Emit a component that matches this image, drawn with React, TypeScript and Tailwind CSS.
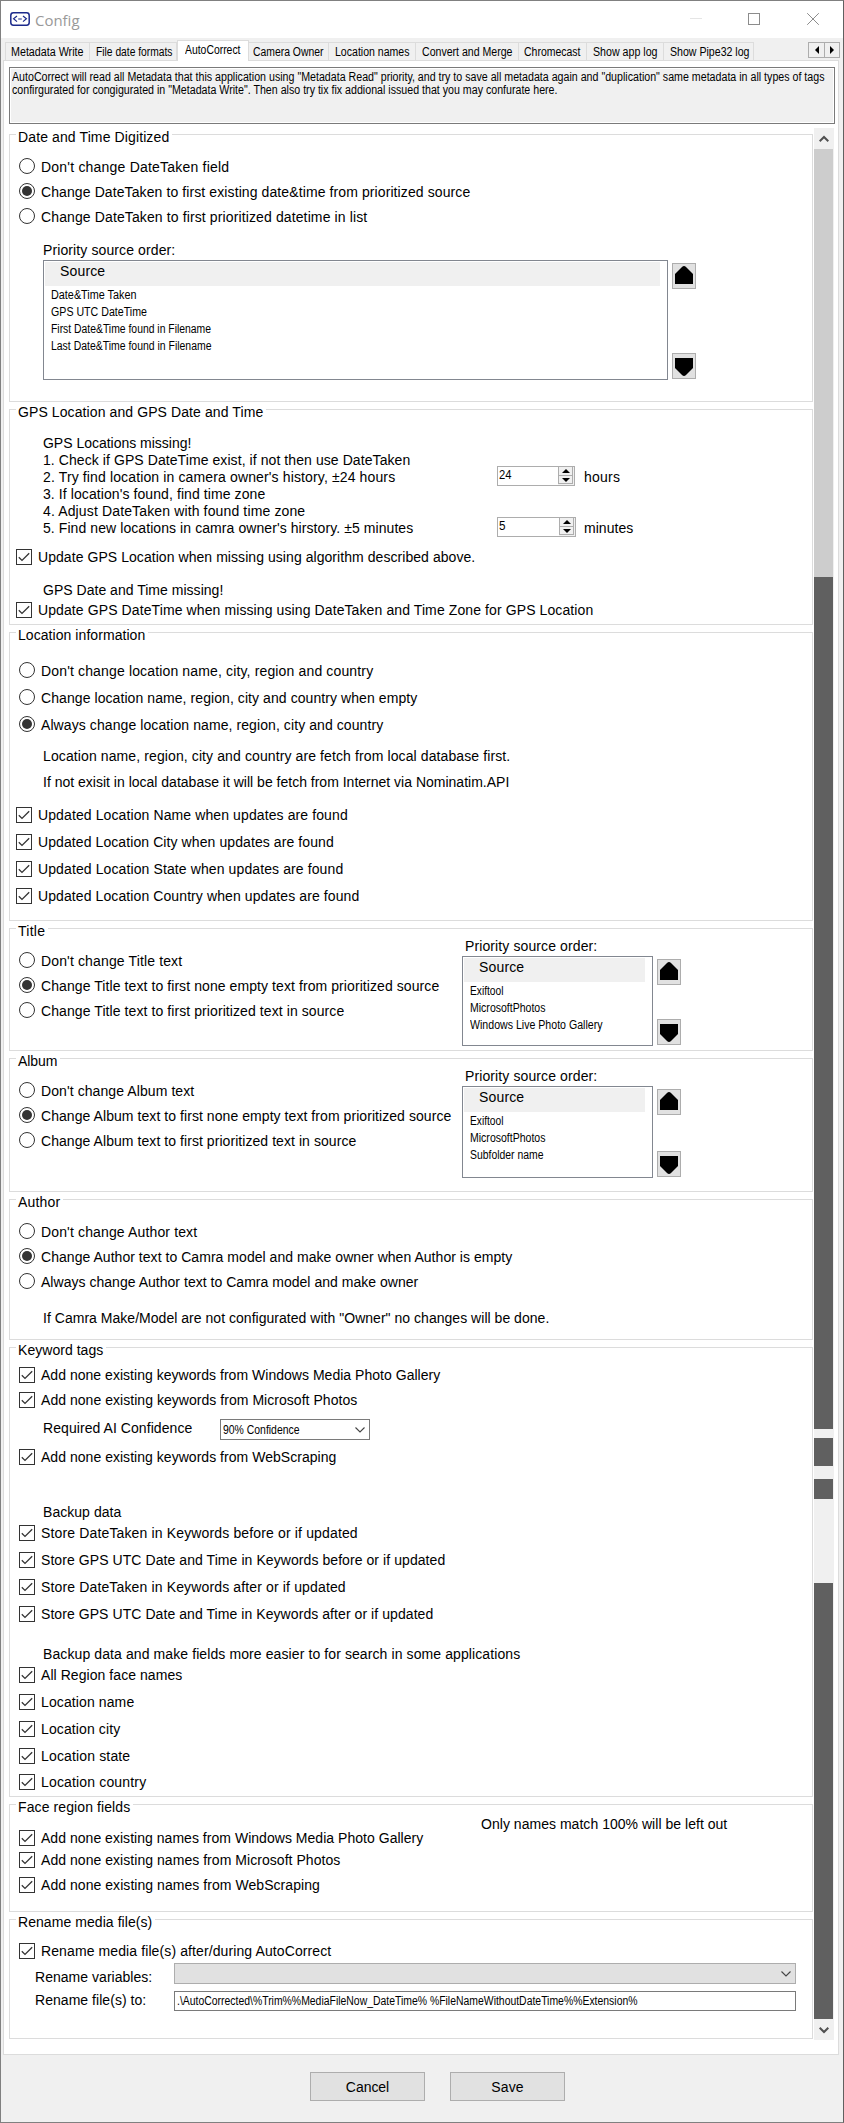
import { useLayoutEffect, useRef, useState } from "react";
import type { ReactNode } from "react";

/* A single line of text fitted to a known run width, by tracking or, when narrow, by condensing. */
function Txt({ w, narrow = false, className = "", children }: { w: number; narrow?: boolean; className?: string; children: string }) {
  const ref = useRef<HTMLSpanElement>(null);
  const [natural, setNatural] = useState(0);
  useLayoutEffect(() => {
    if (ref.current) setNatural(ref.current.getBoundingClientRect().width);
  }, [children]);
  const style = !natural
    ? {}
    : narrow
      ? { transform: "scaleX(" + (w + 0.5) / natural + ")" }
      : { letterSpacing: (w + 0.3 - natural) / children.length + "px" };
  return (
    <span ref={ref} className={"inline-block origin-left whitespace-pre " + className} style={style}>
      {children}
    </span>
  );
}

function Group({ title, w, className, children }: { title: string; w: number; className: string; children: ReactNode }) {
  return (
    <section className={"flex w-[804px] shrink-0 flex-col border border-[#dcdcdc] " + className}>
      <div className="-mt-[5px] ml-[6px] flex h-4 w-fit shrink-0 bg-white pl-[2px] pr-[3px] leading-[14px]">
        <Txt w={w}>{title}</Txt>
      </div>
      {children}
    </section>
  );
}

function Radio({ w, on = false, className = "", children }: { w: number; on?: boolean; className?: string; children: string }) {
  return (
    <label className={"ml-[9px] flex h-4 shrink-0 gap-[6px] leading-4 " + className}>
      <span className="flex size-4 shrink-0 items-center justify-center rounded-full border border-[#333]">
        {on && <span className="size-[10px] rounded-full bg-[#333]" />}
      </span>
      <Txt w={w} className="pt-px">{children}</Txt>
    </label>
  );
}

function Check({ w, className = "ml-[9px]", children }: { w: number; className?: string; children: string }) {
  return (
    <label className={"flex h-4 shrink-0 gap-[6px] leading-4 " + className}>
      <span className="flex size-4 shrink-0 items-center justify-center border border-[#333]">
        <svg width="14" height="14" viewBox="0 0 14 14" fill="none" stroke="#333" strokeWidth="1.3">
          <path d="M1.8 7.2 5 10.4 12.2 3.2" />
        </svg>
      </span>
      <Txt w={w}>{children}</Txt>
    </label>
  );
}

function Line({ w, className, children }: { w: number; className: string; children: string }) {
  return (
    <div className={"flex h-4 shrink-0 leading-[14px] " + className}>
      <Txt w={w}>{children}</Txt>
    </div>
  );
}

function ArrowButton({ down = false }: { down?: boolean }) {
  return (
    <button className={"flex h-[26px] w-6 justify-center border border-[#adadad] bg-[#e1e1e1] " + (down ? "items-end pb-[2px]" : "items-start pt-[2px]")}>
      <svg width="18" height="18" viewBox="0 0 18 18">
        <path d={down ? "M0 0H18V10L11 17Q9 19 7 17L0 10Z" : "M0 18V8L7 1Q9 -1 11 1L18 8V18Z"} fill="#000" />
      </svg>
    </button>
  );
}

type Item = { t: string; w: number };

function SourceList({ items, box, header, className }: { items: Item[]; box: string; header: string; className: string }) {
  return (
    <div className={"flex shrink-0 gap-1 " + className}>
      <div className={"flex flex-col border border-[#828790] bg-white p-px " + box}>
        <div className={"flex h-6 shrink-0 bg-[#f0f0f0] pl-[15px] pt-px leading-4 " + header}>
          <Txt w={45}>Source</Txt>
        </div>
        <div className="flex flex-col pl-[6px] pt-[3px]">
          {items.map((i) => (
            <div key={i.t} className="flex h-[17px] text-[12px] leading-[13px]">
              <Txt narrow w={i.w}>{i.t}</Txt>
            </div>
          ))}
        </div>
      </div>
      <div className="flex flex-col justify-between pb-px pt-[3px]">
        <ArrowButton />
        <ArrowButton down />
      </div>
    </div>
  );
}

function Spinner({ value, w, unit, uw, box, gap }: { value: string; w: number; unit: string; uw: number; box: string; gap: string }) {
  return (
    <div className={"flex h-5 items-start " + gap}>
      <div className={"flex h-5 justify-between border border-[#adadad] bg-white pl-[1px] " + box}>
        <div className="pt-[2px] text-[12px] leading-[13px]">
          <Txt narrow w={w}>{value}</Txt>
        </div>
        <div className="flex w-4 flex-col bg-[#f0f0f0] pr-px">
          <span className="flex h-[9px] items-center justify-center border border-t-0 border-[#adadad]">
            <svg width="8" height="4" viewBox="0 0 8 4"><path d="M0 4 4 0 8 4Z" /></svg>
          </span>
          <span className="flex h-[8px] items-center justify-center border border-t-0 border-[#adadad]">
            <svg width="8" height="4" viewBox="0 0 8 4"><path d="M0 0 4 4 8 0Z" /></svg>
          </span>
        </div>
      </div>
      <div className="flex pt-[3px] leading-4">
        <Txt w={uw}>{unit}</Txt>
      </div>
    </div>
  );
}

function Chevron() {
  return (
    <svg width="10" height="6" viewBox="0 0 10 6" fill="none" stroke="#444" strokeWidth="1.1">
      <path d="M.5 .5 5 5 9.5 .5" />
    </svg>
  );
}

const TABS: { t: string; w: number; c: string }[] = [
  { t: "Metadata Write", w: 72, c: "w-[85px] pl-[5px] border-l" },
  { t: "File date formats", w: 76, c: "w-[87px] pl-[6px]" },
  { t: "AutoCorrect", w: 55, c: "" },
  { t: "Camera Owner", w: 70, c: "w-[80px] pl-[4px]" },
  { t: "Location names", w: 74, c: "w-[87px] pl-[6px]" },
  { t: "Convert and Merge", w: 90, c: "w-[103px] pl-[6px]" },
  { t: "Chromecast", w: 56, c: "w-[68px] pl-[5px]" },
  { t: "Show app log", w: 64, c: "w-[77px] pl-[6px]" },
  { t: "Show Pipe32 log", w: 79, c: "w-[90px] pl-[6px]" },
];

function TabStrip() {
  return (
    <div className="flex h-[23px] shrink-0 items-start pl-1 pt-[2px]">
      {TABS.map((tab) =>
        tab.t === "AutoCorrect" ? (
          <div key={tab.t} className="z-10 flex h-[21px] w-[72px] shrink-0 border border-b-0 border-[#dcdcdc] bg-white pl-[7px] pt-[2px] text-[12px] leading-[14px]">
            <Txt narrow w={tab.w}>{tab.t}</Txt>
          </div>
        ) : (
          <div key={tab.t} className={"mt-[2px] flex h-[18px] shrink-0 border-r border-t border-[#dcdcdc] bg-[#f0f0f0] pt-[2px] text-[12px] leading-[14px] " + tab.c}>
            <Txt narrow w={tab.w}>{tab.t}</Txt>
          </div>
        )
      )}
      <div className="ml-[54px] mt-[2px] flex h-4 shrink-0">
        <span className="flex w-[17px] items-center justify-center border border-[#adadad]">
          <svg width="4" height="8" viewBox="0 0 4 8"><path d="M4 0V8L0 4Z" /></svg>
        </span>
        <span className="-ml-px flex w-[16px] items-center justify-center border border-[#adadad]">
          <svg width="4" height="8" viewBox="0 0 4 8"><path d="M0 0V8L4 4Z" /></svg>
        </span>
      </div>
    </div>
  );
}

function Scrollbar() {
  return (
    <div className="flex w-5 shrink-0 flex-col bg-[#f0f0f0]">
      <div className="flex h-[21px] items-center justify-center">
        <svg width="10" height="8" viewBox="0 0 10 8" fill="none" stroke="#505050" strokeWidth="2"><path d="M.7 6.3 5 2 9.3 6.3" /></svg>
      </div>
      <div className="h-[428px] w-[19px] bg-[#cdcdcd]" />
      <div className="h-[852px] w-[19px] bg-[#606060]" />
      <div className="mt-[9px] h-[28px] w-[19px] bg-[#606060]" />
      <div className="mt-[13px] h-[20px] w-[19px] bg-[#606060]" />
      <div className="mt-[84px] h-[436px] w-[19px] bg-[#606060]" />
      <div className="flex h-[21px] items-center justify-center">
        <svg width="10" height="8" viewBox="0 0 10 8" fill="none" stroke="#505050" strokeWidth="2"><path d="M.7 1.7 5 6 9.3 1.7" /></svg>
      </div>
    </div>
  );
}

export default function App() {
  return (
    <div className="flex h-[2123px] w-[844px] flex-col overflow-hidden border border-[#808080] border-r-[#606060] bg-[#f0f0f0] font-['Liberation_Sans',Arial,sans-serif] text-[14px] text-black">
      <header className="flex h-[37px] shrink-0 items-start bg-white pl-[9px]">
        <svg className="mt-[11px]" width="20" height="14" viewBox="0 0 20 14" fill="none" stroke="#1c2a8c">
          <rect x=".8" y=".8" width="18.4" height="12.4" rx="2.6" strokeWidth="1.5" />
          <path d="M7 4 3.6 6.8 7 9.6M13 4l3.4 2.8L13 9.6M8.2 7h3.6" strokeWidth="1.2" />
        </svg>
        <div className="ml-[5px] mt-[8px] flex w-[655px] font-['Open_Sans','Noto_Sans',sans-serif] text-[15px] leading-[22px] text-[#999]">
          <Txt narrow w={44}>Config</Txt>
        </div>
        <span className="mt-[17px] h-px w-3 bg-[#e5e5e5]" />
        <span className="ml-[46px] mt-[12px] size-3 border border-[#8c8c8c]" />
        <svg className="ml-[47px] mt-[12px]" width="12" height="12" viewBox="0 0 12 12" stroke="#8c8c8c"><path d="M.2 .2 11.8 11.8M11.8 .2 .2 11.8" /></svg>
      </header>

      <div className="flex h-[23px] shrink-0 flex-col">
        <TabStrip />
      </div>

      <main className="-mt-px ml-[2px] flex h-[1995px] w-[836px] shrink-0 flex-col border border-[#dcdcdc] bg-white">
        <div className="ml-[5px] mt-[6px] flex h-[57px] w-[826px] shrink-0 flex-col border border-[#7a7a7a] bg-[#f0f0f0] pl-[2px] pt-[3px] text-[12px] leading-[13px] shadow-[inset_0_0_0_1px_#fff]">
          <Txt narrow w={812} className="w-fit">{'AutoCorrect will read all Metadata that this application using "Metadata Read" priority, and try to save all metadata again and "duplication" same metadata in all types of tags'}</Txt>
          <Txt narrow w={545} className="w-fit">{'confirgurated for congigurated in "Metadata Write". Then also try tix fix addional issued that you may confurate here.'}</Txt>
        </div>

        <div className="ml-[5px] mt-[4px] flex h-[1912px] gap-px">
          <div className="flex w-[804px] flex-col gap-[7px] pt-[6px]">
            <Group title="Date and Time Digitized" w={151} className="h-[268px]">
              <Radio w={188} className="mt-[12px]">Don't change DateTaken field</Radio>
              <Radio w={429} on className="mt-[9px]">{"Change DateTaken to first existing date&time from prioritized source"}</Radio>
              <Radio w={326} className="mt-[9px]">Change DateTaken to first prioritized datetime in list</Radio>
              <Line w={132} className="ml-[33px] mt-[18px] pt-px">Priority source order:</Line>
              <SourceList
                className="ml-[33px] mt-[2px] h-[120px]"
                box="w-[625px]"
                header="w-[615px]"
                items={[
                  { t: "Date&Time Taken", w: 85 },
                  { t: "GPS UTC DateTime", w: 95.5 },
                  { t: "First Date&Time found in Filename", w: 159.5 },
                  { t: "Last Date&Time found in Filename", w: 160 },
                ]}
              />
            </Group>

            <Group title="GPS Location and GPS Date and Time" w={245} className="h-[216px]">
              <div className="ml-[33px] mt-[14px] flex h-[102px] shrink-0">
                <div className="flex w-[454px] flex-col items-start leading-[17px]">
                  <Txt w={148}>GPS Locations missing!</Txt>
                  <Txt w={367}>1. Check if GPS DateTime exist, if not then use DateTaken</Txt>
                  <Txt w={352}>2. Try find location in camera owner's history, ±24 hours</Txt>
                  <Txt w={222}>3. If location's found, find time zone</Txt>
                  <Txt w={262}>4. Adjust DateTaken with found time zone</Txt>
                  <Txt w={370}>5. Find new locations in camra owner's hirstory. ±5 minutes</Txt>
                </div>
                <div className="flex flex-col justify-between pt-[31px]">
                  <Spinner value="24" w={12} unit="hours" uw={36} box="w-[78px]" gap="gap-[9px]" />
                  <Spinner value="5" w={6} unit="minutes" uw={49} box="w-[79px]" gap="gap-[8px]" />
                </div>
              </div>
              <Check w={437} className="ml-[6px] mt-[12px]">Update GPS Location when missing using algorithm described above.</Check>
              <Line w={180} className="ml-[33px] mt-[18px]">GPS Date and Time missing!</Line>
              <Check w={555} className="ml-[6px] mt-[3px]">Update GPS DateTime when missing using DateTaken and Time Zone for GPS Location</Check>
            </Group>

            <Group title="Location information" w={127} className="h-[289px]">
              <Radio w={332} className="mt-[18px]">Don't change location name, city, region and country</Radio>
              <Radio w={376} className="mt-[11px]">Change location name, region, city and country when empty</Radio>
              <Radio w={342} on className="mt-[11px]">Always change location name, region, city and country</Radio>
              <Line w={467} className="ml-[33px] mt-[16px] pt-px">Location name, region, city and country are fetch from local database first.</Line>
              <Line w={466} className="ml-[33px] mt-[11px]">If not exisit in local database it will be fetch from Internet via Nominatim.API</Line>
              <Check w={309.5} className="ml-[6px] mt-[16px]">Updated Location Name when updates are found</Check>
              <Check w={295.5} className="ml-[6px] mt-[11px]">Updated Location City when updates are found</Check>
              <Check w={305} className="ml-[6px] mt-[11px]">Updated Location State when updates are found</Check>
              <Check w={321} className="ml-[6px] mt-[11px]">Updated Location Country when updates are found</Check>
            </Group>

            <Group title="Title" w={27} className="h-[123px]">
              <div className="flex">
                <div className="flex w-[452px] flex-col gap-[9px] pt-[12px]">
                  <Radio w={141}>Don't change Title text</Radio>
                  <Radio w={398} on>Change Title text to first none empty text from prioritized source</Radio>
                  <Radio w={303}>Change Title text to first prioritized text in source</Radio>
                </div>
                <div className="-mt-px flex flex-col">
                  <Line w={132} className="ml-[3px]">Priority source order:</Line>
                  <SourceList
                    className="mt-px h-[90px]"
                    box="w-[191px]"
                    header="w-[181px]"
                    items={[
                      { t: "Exiftool", w: 33 },
                      { t: "MicrosoftPhotos", w: 75 },
                      { t: "Windows Live Photo Gallery", w: 132 },
                    ]}
                  />
                </div>
              </div>
            </Group>

            <Group title="Album" w={39} className="h-[134px]">
              <div className="flex">
                <div className="flex w-[452px] flex-col gap-[9px] pt-[12px]">
                  <Radio w={153}>Don't change Album text</Radio>
                  <Radio w={410} on>Change Album text to first none empty text from prioritized source</Radio>
                  <Radio w={315}>Change Album text to first prioritized text in source</Radio>
                </div>
                <div className="-mt-px flex flex-col">
                  <Line w={132} className="ml-[3px]">Priority source order:</Line>
                  <SourceList
                    className="mt-px h-[92px]"
                    box="w-[191px]"
                    header="w-[181px]"
                    items={[
                      { t: "Exiftool", w: 33 },
                      { t: "MicrosoftPhotos", w: 75 },
                      { t: "Subfolder name", w: 73 },
                    ]}
                  />
                </div>
              </div>
            </Group>

            <Group title="Author" w={42} className="h-[141px]">
              <Radio w={156} className="mt-[12px]">Don't change Author text</Radio>
              <Radio w={471} on className="mt-[9px]">Change Author text to Camra model and make owner when Author is empty</Radio>
              <Radio w={377} className="mt-[9px]">Always change Author text to Camra model and make owner</Radio>
              <Line w={506} className="ml-[33px] mt-[22px]">If Camra Make/Model are not configurated with "Owner" no changes will be done.</Line>
            </Group>

            <Group title="Keyword tags" w={85} className="h-[450px]">
              <Check w={399} className="ml-[9px] mt-[8px]">Add none existing keywords from Windows Media Photo Gallery</Check>
              <Check w={316} className="ml-[9px] mt-[9px]">Add none existing keywords from Microsoft Photos</Check>
              <div className="ml-[33px] mt-[11px] flex h-[21px] shrink-0">
                <div className="flex w-[177px] pt-px leading-4">
                  <Txt w={149}>Required AI Confidence</Txt>
                </div>
                <div className="flex w-[150px] items-center justify-between border border-[#7a7a7a] bg-white pl-[2px] pr-[4px] text-[12px] leading-[14px]">
                  <Txt narrow w={76}>90% Confidence</Txt>
                  <Chevron />
                </div>
              </div>
              <Check w={295} className="ml-[9px] mt-[9px]">Add none existing keywords from WebScraping</Check>
              <Line w={78} className="ml-[33px] mt-[40px]">Backup data</Line>
              <div className="mt-[4px] flex flex-col gap-[11px]">
                <Check w={316.5}>Store DateTaken in Keywords before or if updated</Check>
                <Check w={404}>Store GPS UTC Date and Time in Keywords before or if updated</Check>
                <Check w={304.5}>Store DateTaken in Keywords after or if updated</Check>
                <Check w={392}>Store GPS UTC Date and Time in Keywords after or if updated</Check>
              </div>
              <Line w={477} className="ml-[33px] mt-[25px]">Backup data and make fields more easier to for search in some applications</Line>
              <div className="mt-[4px] flex flex-col gap-[11px]">
                <Check w={141}>All Region face names</Check>
                <Check w={93}>Location name</Check>
                <Check w={79}>Location city</Check>
                <Check w={89}>Location state</Check>
              </div>
              <Check w={105} className="ml-[9px] mt-[10px]">Location country</Check>
            </Group>

            <Group title="Face region fields" w={112} className="h-[108px]">
              <div className="flex">
                <div className="flex w-[471px] flex-col pt-[14px]">
                  <Check w={382}>Add none existing names from Windows Media Photo Gallery</Check>
                  <Check w={299} className="ml-[9px] mt-[6px]">Add none existing names from Microsoft Photos</Check>
                  <Check w={278.5} className="ml-[9px] mt-[9px]">Add none existing names from WebScraping</Check>
                </div>
                <Line w={246} className="pt-px">Only names match 100% will be left out</Line>
              </div>
            </Group>

            <Group title="Rename media file(s)" w={134} className="h-[120px]">
              <Check w={290} className="ml-[9px] mt-[12px]">Rename media file(s) after/during AutoCorrect</Check>
              <div className="ml-[25px] mt-[4px] flex h-[21px] shrink-0">
                <div className="flex w-[139px] pt-[6px] leading-4">
                  <Txt w={117}>Rename variables:</Txt>
                </div>
                <div className="flex w-[622px] items-center justify-end border border-[#adadad] bg-[#e1e1e1] pr-[4px]">
                  <Chevron />
                </div>
              </div>
              <div className="ml-[25px] mt-[7px] flex h-5 shrink-0">
                <div className="flex w-[139px] pt-px leading-4">
                  <Txt w={111}>Rename file(s) to:</Txt>
                </div>
                <div className="flex w-[622px] items-center border border-[#7a7a7a] bg-white pl-[2px] text-[12px] leading-[14px]">
                  <Txt narrow w={460}>{".\\AutoCorrected\\%Trim%%MediaFileNow_DateTime% %FileNameWithoutDateTime%%Extension%"}</Txt>
                </div>
              </div>
            </Group>
          </div>
          <Scrollbar />
        </div>
      </main>

      <footer className="flex gap-[25px] pl-[309px] pt-[17px]">
        <button className="flex h-[29px] w-[115px] items-center justify-center border border-[#adadad] bg-[#e1e1e1] pt-px leading-4">
          <Txt w={43}>Cancel</Txt>
        </button>
        <button className="flex h-[29px] w-[115px] items-center justify-center border border-[#adadad] bg-[#e1e1e1] pt-px leading-4">
          <Txt w={32}>Save</Txt>
        </button>
      </footer>
    </div>
  );
}
